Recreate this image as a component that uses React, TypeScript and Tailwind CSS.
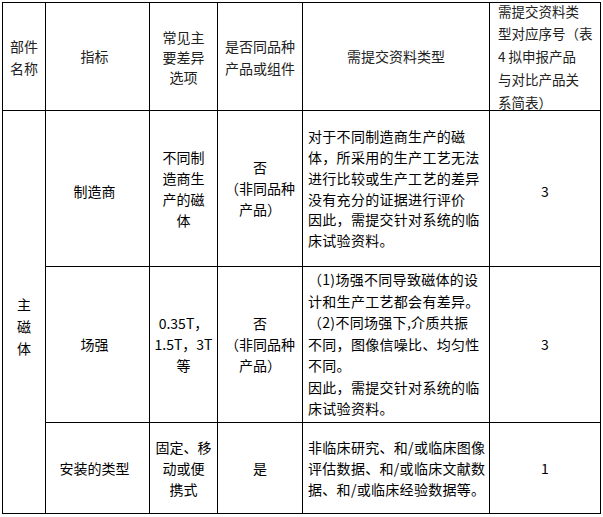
import React from "react";

const font = { fontFamily: '"Noto Sans CJK SC", "Noto Sans", sans-serif' };

function Lines({ lines }: { lines: string[] }) {
  return (
    <>
      {lines.map((l, i) => (
        <div key={i} className="whitespace-nowrap">
          {l}
        </div>
      ))}
    </>
  );
}

export default function App() {
  const hdr = "bg-white flex items-center justify-center text-center text-[14px] leading-[21px] text-[#222]";
  const cell = "bg-white flex items-center justify-center text-center text-[14px] leading-[21px] text-black";
  const body = "bg-white flex items-center justify-start text-left text-[14px] leading-[21px] text-black pl-[5px] tracking-[0.3px]";
  return (
    <div className="w-[603px] h-[517px] bg-white" style={font}>
      <div className="pt-[2px] pl-[2px]">
        <div className="inline-grid grid-cols-[42px_103px_67px_84px_186px_110px] grid-rows-[107px_155px_155px_90px] gap-px bg-black border border-black">
          {/* header */}
          <div className={hdr}>
            <div className="leading-[22px]">
              <Lines lines={["部件", "名称"]} />
            </div>
          </div>
          <div className={hdr + " pr-[6px]"}>指标</div>
          <div className={hdr}>
            <div className="leading-[20px]">
              <Lines lines={["常见主", "要差异", "选项"]} />
            </div>
          </div>
          <div className={hdr}>
            <div className="leading-[22px]">
              <Lines lines={["是否同品种", "产品或组件"]} />
            </div>
          </div>
          <div className={hdr}>需提交资料类型</div>
          <div className="bg-white flex items-center justify-start text-left text-[13.5px] text-[#222] pl-[8px]">
            <div className="leading-[22.8px]">
              <Lines lines={["需提交资料类", "型对应序号（表", "4\u00a0拟申报产品", "与对比产品关", "系简表）"]} />
            </div>
          </div>

          {/* 主磁体 rowspan */}
          <div className={cell + " row-span-3 pt-[28px]"}>
            <div className="leading-[22px]">
              <Lines lines={["主", "磁", "体"]} />
            </div>
          </div>

          {/* row 1 */}
          <div className={cell + " pr-[6px] pt-[6px]"}>制造商</div>
          <div className={cell}>
            <div>
              <Lines lines={["不同制", "造商生", "产的磁", "体"]} />
            </div>
          </div>
          <div className={cell}>
            <div>
              <Lines lines={["否", "（非同品种", "产品）"]} />
            </div>
          </div>
          <div className={body}>
            <div className="leading-[20.7px]">
              <Lines
                lines={[
                  "对于不同制造商生产的磁",
                  "体，所采用的生产工艺无法",
                  "进行比较或生产工艺的差异",
                  "没有充分的证据进行评价",
                  "因此，需提交针对系统的临",
                  "床试验资料。",
                ]}
              />
            </div>
          </div>
          <div className={cell + " pt-[6px]"}>3</div>

          {/* row 2 */}
          <div className={cell + " pr-[6px]"}>场强</div>
          <div className={cell}>
            <div>
              <Lines lines={["0.35T，", "1.5T，3T", "等"]} />
            </div>
          </div>
          <div className={cell}>
            <div>
              <Lines lines={["否", "（非同品种", "产品）"]} />
            </div>
          </div>
          <div className={body}>
            <div className="leading-[21.5px]">
              <Lines
                lines={[
                  "（1)场强不同导致磁体的设",
                  "计和生产工艺都会有差异。",
                  "（2)不同场强下,介质共振",
                  "不同，图像信噪比、均匀性",
                  "不同。",
                  "因此，需提交针对系统的临",
                  "床试验资料。",
                ]}
              />
            </div>
          </div>
          <div className={cell}>3</div>

          {/* row 3 */}
          <div className={cell + " pr-[6px]"}>安装的类型</div>
          <div className={cell}>
            <div>
              <Lines lines={["固定、移", "动或便", "携式"]} />
            </div>
          </div>
          <div className={cell}>是</div>
          <div className={body}>
            <div>
              <Lines
                lines={[
                  "非临床研究、和/或临床图像",
                  "评估数据、和/或临床文献数",
                  "据、和/或临床经验数据等。",
                ]}
              />
            </div>
          </div>
          <div className={cell}>1</div>
        </div>
      </div>
    </div>
  );
}
